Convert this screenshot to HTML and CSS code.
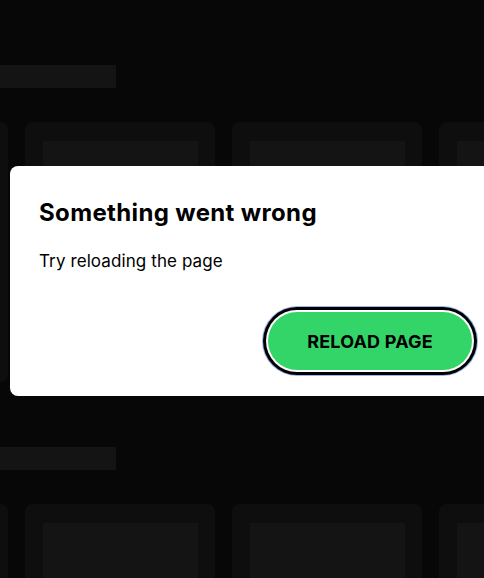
FILE: index.html
```html
<!DOCTYPE html>
<html>
<head>
<meta charset="utf-8">
<link rel="stylesheet" href="styles.css">
</head>
<body>
<div class="page">
  <section class="shelf">
    <div class="shelf-title"></div>
    <div class="cards">
      <div class="card"><div class="cover"></div></div>
      <div class="card"><div class="cover"></div></div>
      <div class="card"><div class="cover"></div></div>
      <div class="card"><div class="cover"></div></div>
    </div>
  </section>
  <section class="shelf">
    <div class="shelf-title"></div>
    <div class="cards">
      <div class="card"><div class="cover"></div></div>
      <div class="card"><div class="cover"></div></div>
      <div class="card"><div class="cover"></div></div>
      <div class="card"><div class="cover"></div></div>
    </div>
  </section>
</div>
<div class="dialog" role="alertdialog">
  <h1 class="dialog-title">Something went wrong</h1>
  <p class="dialog-text">Try reloading the page</p>
  <div class="dialog-actions">
    <button class="reload-btn">RELOAD PAGE</button>
  </div>
</div>
</body>
</html>
```
FILE: styles.css
```css
html, body {
  margin: 0;
  padding: 0;
  background: #070707;
  overflow: hidden;
  height: 100%;
}
body {
  font-family: Inter, "Noto Sans", sans-serif;
}
.page {
  display: flex;
  flex-direction: column;
}
.shelf {
  padding-top: 65px;
  height: 317px;
  display: flex;
  flex-direction: column;
  gap: 34px;
}
.shelf-title {
  width: 116px;
  height: 26px;
  background: #141414;
}
.cards {
  display: flex;
  gap: 17px;
  margin-left: -182px;
}
.card {
  flex: 0 0 190px;
  height: 260px;
  background: #0e0e0e;
  border-radius: 8px;
  padding: 19px 17px 0 18px;
  box-sizing: border-box;
}
.cover {
  width: 155px;
  height: 155px;
  background: #141414;
}
.dialog {
  position: absolute;
  left: 10px;
  top: 166px;
  width: 494px;
  height: 230px;
  box-sizing: border-box;
  background: #fff;
  border-radius: 8px;
  padding: 32px 32px 0 29px;
  display: flex;
  flex-direction: column;
}
.dialog-title {
  margin: 0;
  font-size: 24px;
  line-height: 30px;
  font-weight: 700;
  color: #000;
  letter-spacing: 0.35px;
}
.dialog-text {
  margin: 22px 0 0;
  font-size: 17px;
  line-height: 22px;
  color: #000;
  letter-spacing: 0.1px;
}
.dialog-actions {
  margin-top: 40px;
  display: flex;
  justify-content: flex-end;
}
.reload-btn {
  width: 204px;
  height: 58px;
  border: none;
  border-radius: 29px;
  background: #33d568;
  color: #000;
  font-family: Inter, "Noto Sans", sans-serif;
  font-size: 18px;
  font-weight: 700;
  letter-spacing: 0.2px;
  box-shadow: 0 0 0 2px #fff, 0 0 0 5px #000, 0 0 0 6px rgba(90, 130, 220, 0.6);
  padding: 0;
}
```
